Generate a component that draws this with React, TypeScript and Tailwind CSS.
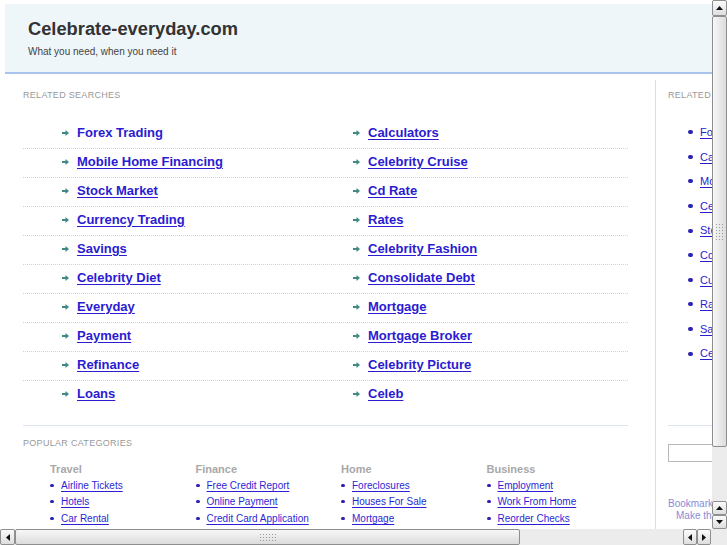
const pairs: [string, string][] = [
  ['Forex Trading', 'Calculators'],
  ['Mobile Home Financing', 'Celebrity Cruise'],
  ['Stock Market', 'Cd Rate'],
  ['Currency Trading', 'Rates'],
  ['Savings', 'Celebrity Fashion'],
  ['Celebrity Diet', 'Consolidate Debt'],
  ['Everyday', 'Mortgage'],
  ['Payment', 'Mortgage Broker'],
  ['Refinance', 'Celebrity Picture'],
  ['Loans', 'Celeb'],
];

const sideLinks = [
  'Forex Trading',
  'Calculators',
  'Mobile Home Financing',
  'Celebrity Cruise',
  'Stock Market',
  'Cd Rate',
  'Currency Trading',
  'Rates',
  'Savings',
  'Celebrity Fashion',
];

const categories = [
  { title: 'Travel', links: ['Airline Tickets', 'Hotels', 'Car Rental'] },
  { title: 'Finance', links: ['Free Credit Report', 'Online Payment', 'Credit Card Application'] },
  { title: 'Home', links: ['Foreclosures', 'Houses For Sale', 'Mortgage'] },
  { title: 'Business', links: ['Employment', 'Work From Home', 'Reorder Checks'] },
];

function Arrow() {
  return (
    <svg width="7" height="6" viewBox="0 0 7 6" className="shrink-0">
      <path d="M0 2h3.5V0L7 3 3.5 6V4H0z" fill="#3f8a85" />
    </svg>
  );
}

function Tri({ dir }: { dir: 'up' | 'down' | 'left' | 'right' }) {
  const pts = {
    up: '0,4 3.5,0 7,4',
    down: '0,0 7,0 3.5,4',
    left: '4,0 4,7 0,3.5',
    right: '0,0 4,3.5 0,7',
  }[dir];
  const vertical = dir === 'up' || dir === 'down';
  return (
    <svg width={vertical ? 7 : 4} height={vertical ? 4 : 7} viewBox={vertical ? '0 0 7 4' : '0 0 4 7'}>
      <polygon points={pts} fill="#111" />
    </svg>
  );
}

function SbButton({ dir, className }: { dir: 'up' | 'down' | 'left' | 'right'; className: string }) {
  return (
    <div
      className={`shrink-0 flex items-center justify-center border border-[#8f8f8f] rounded-[2px] bg-linear-to-b from-[#fbfbfb] to-[#dedede] ${className}`}
    >
      <Tri dir={dir} />
    </div>
  );
}

function Grip({ cols, rows }: { cols: number; rows: number }) {
  const dots = [];
  for (let r = 0; r < rows; r++) {
    for (let c = 0; c < cols; c++) {
      dots.push(<rect key={`${r}-${c}`} x={c * 3} y={r * 3} width="1" height="1" fill="#9a9a9a" />);
    }
  }
  return (
    <svg width={cols * 3 - 2} height={rows * 3 - 2}>
      {dots}
    </svg>
  );
}

function VScroll() {
  return (
    <div className="w-[15px] h-full flex flex-col bg-[#ececec]">
      <SbButton dir="up" className="h-[16px]" />
      <div className="h-[431px] shrink-0 border border-[#8e8e8e] rounded-[2px] bg-linear-to-r from-[#f7f7f7] to-[#dcdcdc] flex items-center justify-center">
        <Grip cols={3} rows={6} />
      </div>
      <div className="flex-1" />
      <SbButton dir="up" className="h-[14px]" />
      <SbButton dir="down" className="h-[14px]" />
    </div>
  );
}

function HScroll() {
  return (
    <div className="h-[16px] flex bg-[#ececec]">
      <SbButton dir="left" className="w-[15px]" />
      <div className="w-[505px] shrink-0 border border-[#8e8e8e] rounded-[2px] bg-linear-to-b from-[#f7f7f7] to-[#dcdcdc] flex items-center justify-center">
        <Grip cols={6} rows={3} />
      </div>
      <div className="flex-1" />
      <SbButton dir="left" className="w-[14px]" />
      <SbButton dir="right" className="w-[14px]" />
      <div className="w-[16px] shrink-0" />
    </div>
  );
}

function Page() {
  return (
    <div className="w-[1000px] pt-[4px] pl-[5px]">
      <header className="h-[70px] bg-[#eff6f9] border-b-2 border-[#a9c3ea] pl-[23px] pt-[14px]">
        <h1 className="text-[18.3px] leading-[22px] font-bold text-[#333]">Celebrate-everyday.com</h1>
        <p className="mt-[6px] text-[10px] leading-[12px] text-[#444]">What you need, when you need it</p>
      </header>

      <div className="flex pt-[6px]">
        {/* main column */}
        <div className="w-[651px] shrink-0 border-r border-[#d5dff0] pl-[18px] pt-[10px] h-[460px]">
          <div className="text-[9px] leading-[11px] tracking-[0.3px] text-[#999]">RELATED SEARCHES</div>
          <div className="mt-[19px] w-[605px]">
            {pairs.map(([a, b], i) => (
              <div
                key={a}
                className={`flex h-[29px] pb-[3px] items-center border-b border-dotted ${
                  i < pairs.length - 1 ? 'border-[#c4d3ef]' : 'border-transparent'
                }`}
              >
                {[a, b].map((t, j) => (
                  <div key={t} className="w-[291px] pl-[39px] flex items-center gap-[8px]">
                    <Arrow />
                    <a
                      className={`text-[13px] leading-[16px] font-bold text-[#2b1bd1] ${
                        i === 0 && j === 0 ? '' : 'underline underline-offset-2'
                      }`}
                    >
                      {t}
                    </a>
                  </div>
                ))}
              </div>
            ))}
          </div>
          <div className="mt-[15px] w-[605px] border-t border-[#dce6f2]" />
          <div className="mt-[12px] text-[9px] leading-[11px] tracking-[0.3px] text-[#999]">POPULAR CATEGORIES</div>
          <div className="mt-[13px] pl-[27px] flex">
            {categories.map(c => (
              <div key={c.title} className="w-[145.5px] shrink-0">
                <div className="text-[11px] leading-[14px] font-bold text-[#a8a8a8]">{c.title}</div>
                <ul className="mt-[1px]">
                  {c.links.map(l => (
                    <li key={l} className="flex items-center h-[16.5px]">
                      <span className="w-[4px] h-[3px] rounded-full bg-[#2c21b0] mr-[7px]" />
                      <a className="text-[10px] text-[#2d1fd6] underline underline-offset-2">{l}</a>
                    </li>
                  ))}
                </ul>
              </div>
            ))}
          </div>
        </div>

        {/* side column */}
        <div className="w-[250px] shrink-0 pl-[12px] pt-[10px]">
          <div className="text-[9px] leading-[11px] tracking-[0.3px] text-[#999]">RELATED SEARCHES</div>
          <ul className="mt-[19px]">
            {sideLinks.map(l => (
              <li key={l} className="flex items-center h-[24.6px] pl-[20px]">
                <span className="w-[5px] h-[4px] rounded-full bg-[#2c21b0] mr-[7px]" />
                <a className="text-[11px] text-[#2b1bd1] underline underline-offset-2 whitespace-nowrap">{l}</a>
              </li>
            ))}
          </ul>
          <div className="mt-[59px] w-[200px] border-t border-[#dce6f2]" />
          <input
            type="text"
            readOnly
            className="mt-[18px] block h-[18px] w-[150px] border border-[#b8b8b8] bg-white"
          />
          <div className="mt-[36px] text-[10px] leading-[12px] text-[#8a8ad8]">
            <div>Bookmark this page</div>
            <div className="pl-[8px]">Make this your homepage</div>
          </div>
        </div>
      </div>
    </div>
  );
}

export default function App() {
  return (
    <div className="w-[727px] h-[545px] flex flex-col overflow-hidden bg-white font-['Liberation_Sans',Arial,sans-serif]">
      <div className="flex h-[529px]">
        <div className="w-[712px] h-full overflow-hidden">
          <Page />
        </div>
        <VScroll />
      </div>
      <HScroll />
    </div>
  );
}
